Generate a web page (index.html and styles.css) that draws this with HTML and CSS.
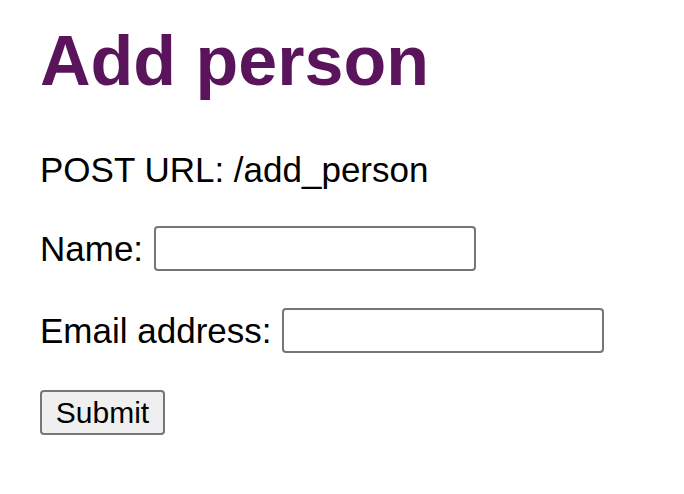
FILE: index.html
```html
<!DOCTYPE html>
<html lang="en">
<head>
<meta charset="utf-8">
<title>Add person</title>
<link rel="stylesheet" href="styles.css">
</head>
<body>
<main class="page">
  <h1 class="title">Add person</h1>
  <p class="url">POST URL: /add_person</p>
  <form class="form" action="/add_person" method="post">
    <label class="row"><span>Name:</span><input class="field" type="text" name="name"></label>
    <label class="row"><span>Email address:</span><input class="field" type="email" name="email"></label>
    <div class="row"><button class="submit" type="submit">Submit</button></div>
  </form>
</main>
</body>
</html>
```
FILE: styles.css
```css
html, body {
  margin: 0;
  padding: 0;
  background: #ffffff;
}
body {
  font-family: "Liberation Sans", Arial, Helvetica, sans-serif;
  color: #000000;
}
.page {
  padding: 21px 40px 0 40px;
}
.title {
  margin: 0;
  font-size: 70px;
  line-height: 80px;
  font-weight: bold;
  color: #5a145b;
}
.url {
  margin: 49px 0 0 0;
  font-size: 35px;
  line-height: 40px;
}
.form {
  display: flex;
  flex-direction: column;
  align-items: flex-start;
  gap: 37px;
  margin-top: 36px;
}
.row {
  display: flex;
  align-items: center;
  gap: 11px;
  font-size: 35px;
  line-height: 40px;
}
.field {
  box-sizing: border-box;
  width: 322px;
  height: 45px;
  margin: 0;
  border: 2px solid #767676;
  border-radius: 4px;
  background: #ffffff;
  font-size: 30px;
  padding: 0 6px;
}
.submit {
  box-sizing: border-box;
  width: 125px;
  height: 45px;
  margin: 0;
  padding: 0;
  border: 2px solid #767676;
  border-radius: 4px;
  background: #efefef;
  color: #000000;
  font-family: "Liberation Sans", Arial, Helvetica, sans-serif;
  font-size: 30px;
  line-height: 41px;
}
```
